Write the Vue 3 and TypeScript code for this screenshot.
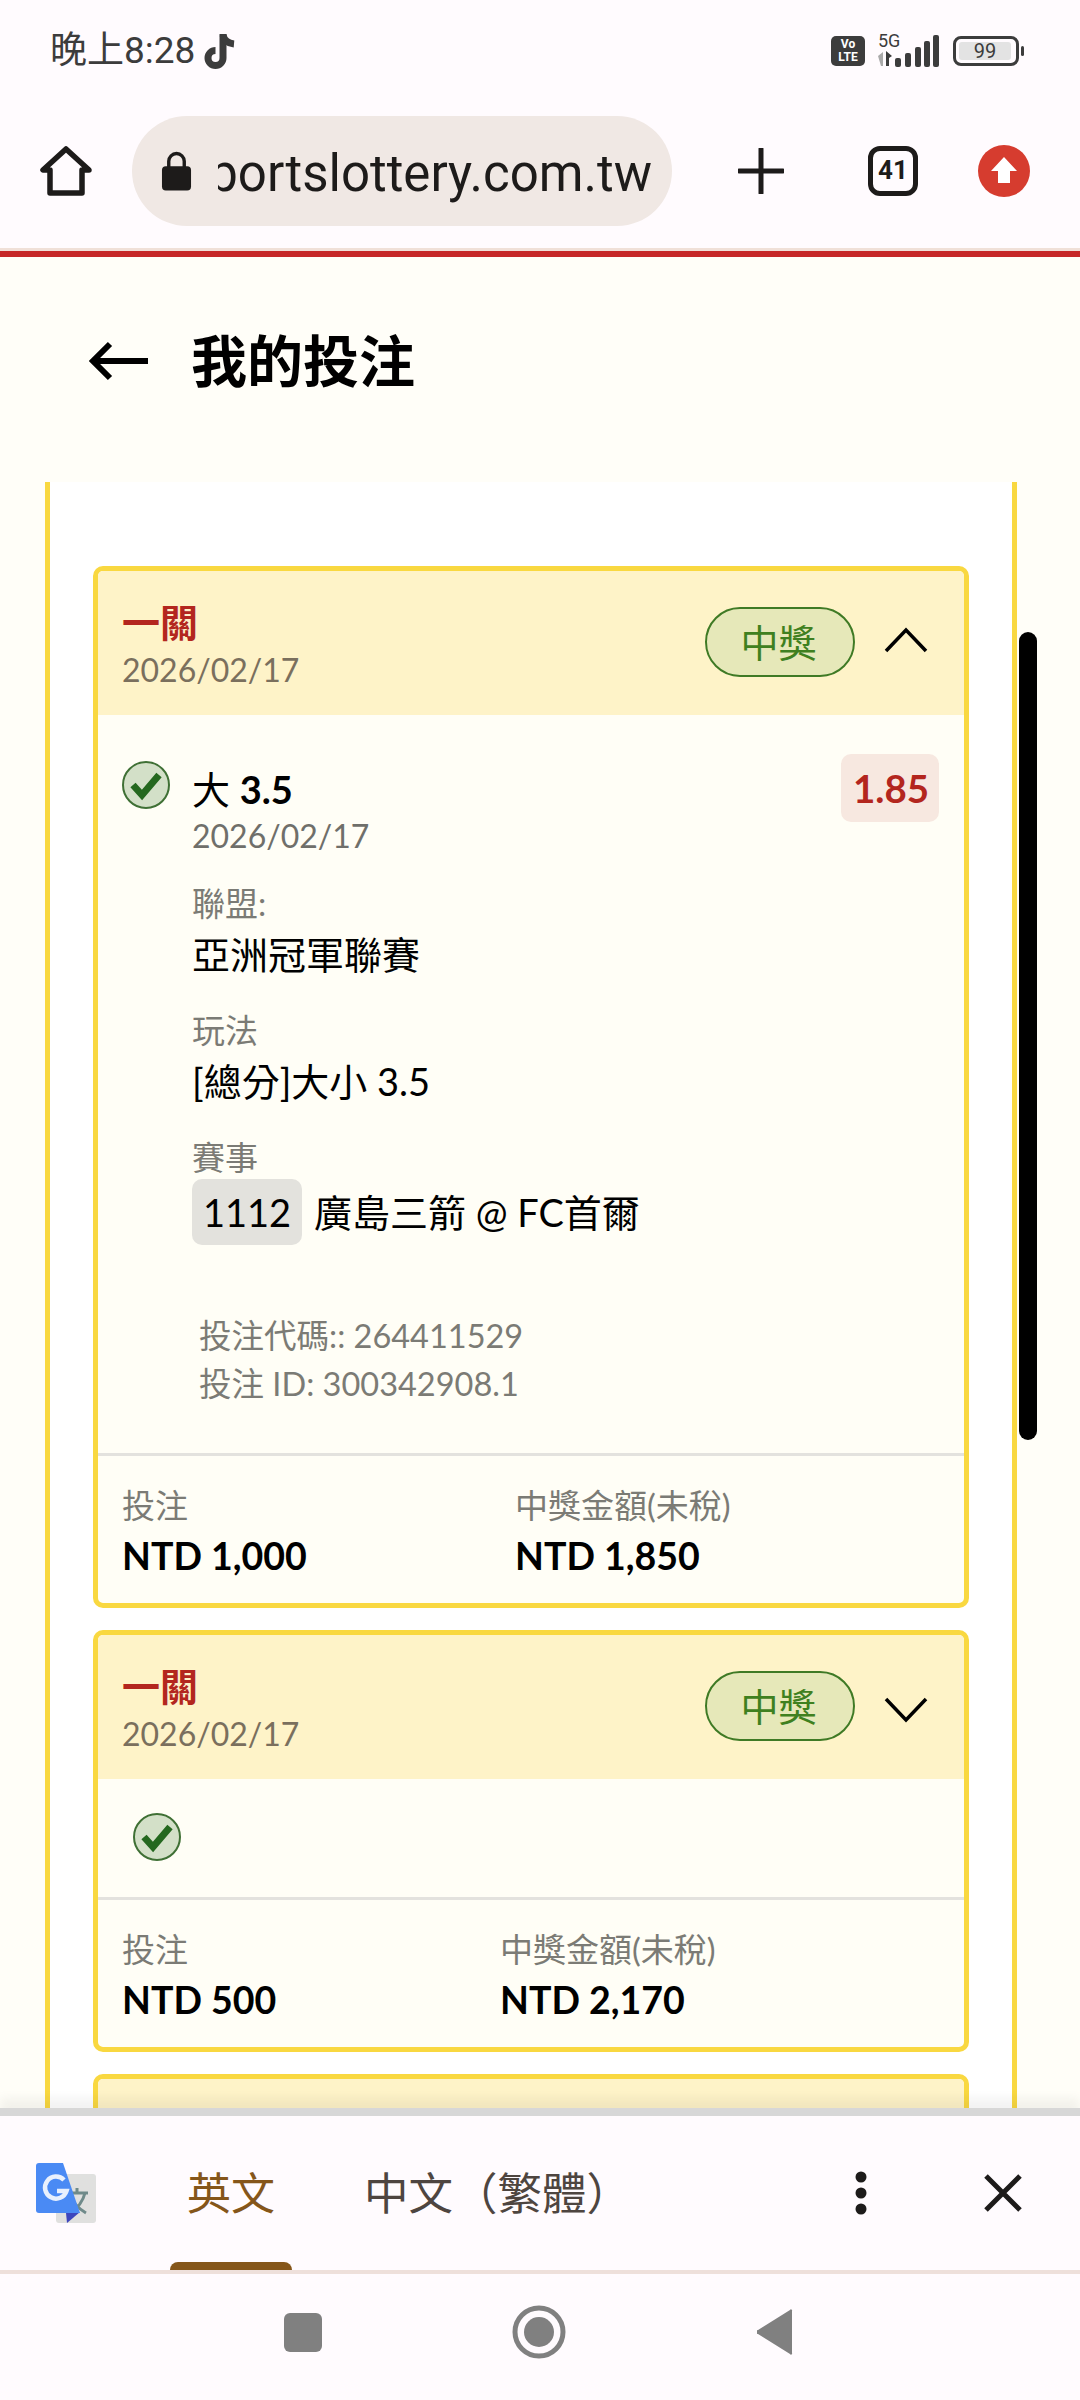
<template>
  <div class="phone">
    <!-- 狀態列 -->
    <div class="status-bar">
      <span class="time">晚上8:28</span>
      <svg class="tiktok" viewBox="0 0 34 38">
        <path d="M20 2v24a7.5 7.5 0 1 1-7.5-7.5" fill="none" stroke="#3c3c3c" stroke-width="7" />
        <path d="M20 3c1 5 5 8.500 11 9" fill="none" stroke="#3c3c3c" stroke-width="7" />
      </svg>
      <span class="status-right">
        <span class="volte">Vo<br />LTE</span>
        <span class="signal">
          <span class="five-g">5G</span>
          <svg class="bars" viewBox="0 0 66 32">
            <path d="M3 21l5-4v14H6z" fill="#aaa" />
            <path d="M11 16l6 5-3 2v8h-3z" fill="#3c3c3c" />
            <rect x="20" y="23" width="6" height="9" rx="2" fill="#3c3c3c" />
            <rect x="30" y="18" width="6" height="14" rx="2" fill="#3c3c3c" />
            <rect x="40" y="12" width="6" height="20" rx="2" fill="#3c3c3c" />
            <rect x="49" y="6" width="6" height="26" rx="2" fill="#3c3c3c" />
            <rect x="58" y="0" width="6" height="32" rx="2" fill="#3c3c3c" />
          </svg>
        </span>
        <span class="battery"><span class="battery-level">99</span></span>
        <span class="battery-cap"></span>
      </span>
    </div>

    <!-- 瀏覽器工具列 -->
    <div class="toolbar">
      <svg class="home" viewBox="0 0 52 50">
        <path d="M26 3 3 24h7v23h32V24h7z" fill="none" stroke="#1d1b1a" stroke-width="5.500" stroke-linejoin="round" />
      </svg>
      <div class="url-pill">
        <svg class="lock" viewBox="0 0 32 40">
          <path d="M8 16V10a8 8 0 0 1 16 0v6" fill="none" stroke="#1d1b1a" stroke-width="3.500" />
          <rect x="1" y="15" width="30" height="25" rx="4" fill="#1d1b1a" />
        </svg>
        <div class="url-clip"><span class="url">sportslottery.com.tw</span></div>
      </div>
      <svg class="plus" viewBox="0 0 46 46">
        <path d="M23 1v44M1 23h44" stroke="#1d1b1a" stroke-width="5" stroke-linecap="round" />
      </svg>
      <div class="tabs-count">41</div>
      <svg class="update" viewBox="0 0 52 52">
        <circle cx="26" cy="26" r="26" fill="#d63c2f" />
        <path d="M26 12 39 26h-7v12H20V26h-7z" fill="#fff" />
      </svg>
    </div>
    <div class="load-line"></div>

    <!-- 頁面 -->
    <div class="page">
      <div class="page-head">
        <svg class="back" viewBox="0 0 60 40">
          <path d="M60 20H6M22 3 5 20l17 17" fill="none" stroke="#000" stroke-width="6" />
        </svg>
        <h1 class="title">我的投注</h1>
      </div>
      <div class="panel">
        <div class="card">
          <div class="card-head">
            <div class="head-text">
              <div class="parlay">一關</div>
              <div class="head-date">2026/02/17</div>
            </div>
            <span class="badge">中獎</span>
            <svg class="chevron up" viewBox="0 0 44 26">
              <path d="M2 24 22 3l20 21" fill="none" stroke="#000" stroke-width="3.500" />
            </svg>
          </div>
          <div class="card-body">
            <div class="leg">
              <svg class="check" viewBox="0 0 48 48">
                <circle cx="24" cy="24" r="23" fill="#d3e0c8" stroke="#3f7035" stroke-width="2" />
                <path d="M11 24l9 10 17-20" fill="none" stroke="#24681f" stroke-width="7" />
              </svg>
              <div class="leg-main">
                <div class="pick">大 <b>3.5</b></div>
                <div class="pick-date">2026/02/17</div>
                <div class="field-label first">聯盟:</div>
                <div class="field-value">亞洲冠軍聯賽</div>
                <div class="field-label">玩法</div>
                <div class="field-value">[總分]大小 3.5</div>
                <div class="field-label">賽事</div>
                <div class="match">
                  <span class="match-no">1112</span>
                  <span>廣島三箭 @ FC首爾</span>
                </div>
              </div>
              <span class="odds">1.85</span>
            </div>
            <div class="codes">
              <div>投注代碼:: 264411529</div>
              <div>投注 ID: 300342908.1</div>
            </div>
          </div>
          <div class="card-foot">
            <div class="foot-col">
              <div class="foot-label">投注</div>
              <div class="foot-value">NTD 1,000</div>
            </div>
            <div class="foot-col">
              <div class="foot-label">中獎金額(未稅)</div>
              <div class="foot-value">NTD 1,850</div>
            </div>
          </div>
        </div>

        <div class="card">
          <div class="card-head">
            <div class="head-text">
              <div class="parlay">一關</div>
              <div class="head-date">2026/02/17</div>
            </div>
            <span class="badge">中獎</span>
            <svg class="chevron down" viewBox="0 0 44 26">
              <path d="M2 2l20 21L42 2" fill="none" stroke="#000" stroke-width="3.500" />
            </svg>
          </div>
          <div class="card-body collapsed">
            <svg class="check" viewBox="0 0 48 48">
              <circle cx="24" cy="24" r="23" fill="#d3e0c8" stroke="#3f7035" stroke-width="2" />
              <path d="M11 24l9 10 17-20" fill="none" stroke="#24681f" stroke-width="7" />
            </svg>
          </div>
          <div class="card-foot second">
            <div class="foot-col">
              <div class="foot-label">投注</div>
              <div class="foot-value">NTD 500</div>
            </div>
            <div class="foot-col">
              <div class="foot-label">中獎金額(未稅)</div>
              <div class="foot-value">NTD 2,170</div>
            </div>
          </div>
        </div>

        <div class="card">
          <div class="card-head"></div>
        </div>
      </div>
      <div class="scrollbar"></div>
    </div>

    <!-- 翻譯列 -->
    <div class="translate-bar">
      <svg class="g-logo" viewBox="0 0 60 60">
        <rect x="20" y="11" width="40" height="49" rx="3" fill="#e0e0df" />
        <path d="M30 30h22M41 25v5M34 50c8-5 13-12 15-20M34 32c3 8 9 14 16 18" fill="none" stroke="#6f8a8a" stroke-width="3" />
        <path d="M30 50l14-1-13 11z" fill="#3c45bd" />
        <path d="M3 0h24l17 50H3a3 3 0 0 1-3-3V3a3 3 0 0 1 3-3z" fill="#4a8af4" />
        <path d="M28 17a11 11 0 1 0 2.500 11H21" fill="none" stroke="#e8f0fd" stroke-width="4.500" />
      </svg>
      <div class="lang active">英文<span class="lang-mark"></span></div>
      <div class="lang">中文（繁體）</div>
      <svg class="dots" viewBox="0 0 12 44">
        <circle cx="6" cy="6" r="5.500" fill="#1d1b1a" />
        <circle cx="6" cy="22" r="5.500" fill="#1d1b1a" />
        <circle cx="6" cy="38" r="5.500" fill="#1d1b1a" />
      </svg>
      <svg class="close" viewBox="0 0 38 38">
        <path d="M2 2l34 34M36 2 2 36" stroke="#1d1b1a" stroke-width="5" />
      </svg>
    </div>

    <!-- 系統導覽列 -->
    <div class="nav-bar">
      <span class="nav-square"></span>
      <svg class="nav-circle" viewBox="0 0 54 54">
        <circle cx="27" cy="27" r="24" fill="none" stroke="#808080" stroke-width="5" />
        <circle cx="27" cy="27" r="15" fill="#808080" />
      </svg>
      <svg class="nav-back" viewBox="0 0 36 46">
        <path d="M35 2v42a1 1 0 0 1-2 1L1 25a2 2 0 0 1 0-4L33 1a1 1 0 0 1 2 1z" fill="#808080" />
      </svg>
    </div>
  </div>
</template>

<script setup lang="ts">
</script>

<style>
html,
body {
  margin: 0;
  background: #fffbfe;
}
</style>

<style scoped>
.phone {
  width: 1080px;
  height: 2400px;
  display: flex;
  flex-direction: column;
  overflow: hidden;
  background: #fffbfe;
  font-family: Lato, "Noto Sans CJK TC", sans-serif;
  color: #000;
}

/* 狀態列 */
.status-bar {
  height: 80px;
  flex-shrink: 0;
  display: flex;
  align-items: center;
  padding: 21px 56px 0 50px;
  box-sizing: border-box;
}

.time {
  font-family: Roboto, "Noto Sans CJK TC", sans-serif;
  font-size: 37px;
  color: #3c3c3c;
  line-height: 44px;
}

.tiktok {
  width: 34px;
  height: 38px;
  margin-left: 8px;
}

.status-right {
  margin-left: auto;
  display: flex;
  align-items: center;
}

.volte {
  width: 34px;
  height: 30px;
  border-radius: 5px;
  background: #3c3c3c;
  color: #fff;
  font-family: Roboto, sans-serif;
  font-size: 12px;
  font-weight: 700;
  line-height: 13px;
  text-align: center;
  padding-top: 2px;
  box-sizing: border-box;
}

.signal {
  position: relative;
  width: 66px;
  height: 32px;
  margin-left: 10px;
}

.five-g {
  position: absolute;
  left: 3px;
  top: -5px;
  font-family: Roboto, sans-serif;
  font-size: 18px;
  color: #3c3c3c;
}

.bars {
  width: 66px;
  height: 32px;
  display: block;
}

.battery {
  width: 66px;
  height: 30px;
  margin-left: 12px;
  border: 3px solid #3c3c3c;
  border-radius: 8px;
  box-sizing: border-box;
  padding: 3px;
}

.battery-level {
  display: block;
  height: 18px;
  width: 52px;
  border-radius: 3px;
  background: #e3e3e3;
  font-family: Roboto, sans-serif;
  font-size: 20px;
  line-height: 19px;
  text-align: center;
  color: #3c3c3c;
}

.battery-cap {
  width: 3px;
  height: 10px;
  margin-left: 2px;
  border-radius: 2px;
  background: #3c3c3c;
}

/* 工具列 */
.toolbar {
  height: 168px;
  flex-shrink: 0;
  display: flex;
  align-items: center;
  padding-top: 14px;
  box-sizing: border-box;
}

.home {
  width: 52px;
  height: 50px;
  margin-left: 40px;
}

.url-pill {
  width: 540px;
  height: 110px;
  margin-left: 40px;
  border-radius: 55px;
  background: #f0e8e4;
  display: flex;
  align-items: center;
  padding-left: 29px;
  box-sizing: border-box;
}

.lock {
  width: 31px;
  height: 40px;
  flex-shrink: 0;
}

.url-clip {
  width: 434px;
  margin-left: 26px;
  padding-top: 5px;
  overflow: hidden;
  direction: rtl;
  white-space: nowrap;
}

.url {
  font-family: Roboto, sans-serif;
  font-size: 51px;
  color: #1d1b1a;
  line-height: 60px;
  unicode-bidi: plaintext;
}

.plus {
  width: 46px;
  height: 46px;
  margin-left: 66px;
}

.tabs-count {
  width: 50px;
  height: 50px;
  margin-left: 84px;
  border: 5px solid #1d1b1a;
  border-radius: 12px;
  box-sizing: border-box;
  font-family: Roboto, sans-serif;
  font-size: 26px;
  font-weight: 700;
  line-height: 39px;
  text-align: center;
  color: #1d1b1a;
}

.update {
  width: 52px;
  height: 52px;
  margin-left: 60px;
}

.load-line {
  height: 9px;
  flex-shrink: 0;
  background: #c62828;
  border-top: 3px solid #f0e0d8;
  box-sizing: border-box;
}

/* 頁面 */
.page {
  flex: 1;
  min-height: 0;
  position: relative;
  overflow: hidden;
  background: #fffef8;
}

.page-head {
  height: 225px;
  display: flex;
  align-items: center;
  padding: 0 0 18px 88px;
  box-sizing: border-box;
}

.back {
  width: 60px;
  height: 40px;
}

.title {
  margin: 0 0 0 43px;
  font-size: 56px;
  font-weight: 700;
  line-height: 70px;
  color: #000;
}

.panel {
  width: 972px;
  margin-left: 45px;
  padding: 84px 43px 0;
  box-sizing: border-box;
  border-left: 5px solid #f9d840;
  border-right: 5px solid #f9d840;
  background: #fff;
  height: 1700px;
  display: flex;
  flex-direction: column;
  gap: 22px;
}

.card {
  border: 5px solid #f9d840;
  border-radius: 10px;
  background: #fffef6;
  overflow: hidden;
  flex-shrink: 0;
}

.card-head {
  height: 144px;
  background: #fef3c8;
  display: flex;
  align-items: center;
  padding: 0 36px 0 24px;
  box-sizing: border-box;
}

.head-text {
  padding-top: 7px;
}

.parlay {
  font-size: 38px;
  font-weight: 700;
  line-height: 46px;
  color: #b3261e;
}

.head-date {
  font-size: 32px;
  line-height: 49px;
  color: #7a6f5d;
}

.badge {
  margin: -3px 0 0 auto;
  width: 150px;
  height: 70px;
  border: 2px solid #3f7a25;
  border-radius: 35px;
  background: #e6e8b9;
  box-sizing: border-box;
  color: #3f8020;
  font-size: 38px;
  line-height: 66px;
  text-align: center;
  padding-right: 3px;
}

.chevron {
  width: 44px;
  height: 26px;
  margin-left: 29px;
}

.chevron.up {
  margin-top: -6px;
}

.chevron.down {
  margin-top: 6px;
}

.card-body {
  padding: 46px 24px 0;
}

.leg {
  display: flex;
  align-items: flex-start;
}

.check {
  width: 48px;
  height: 48px;
  flex-shrink: 0;
}

.leg-main {
  flex: 1;
  margin-left: 22px;
  padding-top: 3px;
}

.pick {
  font-size: 38px;
  line-height: 50px;
}

.pick b {
  font-weight: 700;
}

.pick-date {
  font-size: 32px;
  line-height: 44px;
  color: #6f6f6a;
}

.field-label {
  margin-top: 29px;
  font-size: 33px;
  line-height: 44px;
  color: #7b7b75;
}

.field-label.first {
  margin-top: 23px;
}

.field-value {
  font-size: 38px;
  line-height: 50px;
  margin-top: 4px;
}

.match {
  display: flex;
  align-items: center;
  gap: 12px;
  font-size: 38px;
  line-height: 50px;
}

.match-no {
  width: 110px;
  height: 66px;
  border-radius: 10px;
  background: #e3e2dd;
  line-height: 66px;
  text-align: center;
}

.odds {
  margin-top: -7px;
  width: 98px;
  height: 68px;
  border-radius: 10px;
  background: #f7e8e0;
  color: #b3261e;
  font-size: 38.500px;
  font-weight: 700;
  line-height: 68px;
  text-align: center;
  flex-shrink: 0;
  margin-right: 1px;
  padding-left: 2px;
  box-sizing: border-box;
}

.codes {
  margin: 67px 0 0 77px;
  padding-bottom: 45px;
  font-size: 32.500px;
  line-height: 48px;
  color: #7b7b75;
}

.card-body.collapsed {
  height: 118px;
  padding: 34px 0 0 35px;
  box-sizing: border-box;
}

.card-foot {
  border-top: 3px solid #e3e2de;
  display: flex;
  padding: 27px 24px 0;
  height: 150px;
  box-sizing: border-box;
}

.foot-col {
  width: 393px;
}

.card-foot.second .foot-col {
  width: 378px;
}

.foot-label {
  font-size: 33px;
  line-height: 44px;
  color: #7b7b75;
}

.foot-value {
  margin-top: 4px;
  font-size: 37.500px;
  font-weight: 700;
  line-height: 50px;
}

.scrollbar {
  position: absolute;
  left: 1019px;
  top: 375px;
  width: 18px;
  height: 808px;
  border-radius: 9px;
  background: #000;
}

/* 翻譯列 */
.translate-bar {
  height: 166px;
  flex-shrink: 0;
  display: flex;
  align-items: center;
  position: relative;
  background: #fffbfe;
  border-top: 8px solid #d7d7d7;
  border-bottom: 4px solid #eee0db;
  box-sizing: border-box;
  box-shadow: 0 -10px 10px rgba(0, 0, 0, 0.05);
}

.g-logo {
  width: 60px;
  height: 60px;
  margin-left: 36px;
}

.lang {
  position: relative;
  font-size: 44.500px;
  line-height: 154px;
  color: #4e4540;
  margin-left: 89px;
}

.lang.active {
  color: #85561a;
  font-size: 44px;
  margin-left: 91px;
}

.lang-mark {
  position: absolute;
  left: -17px;
  right: -17px;
  bottom: 0;
  height: 8px;
  border-radius: 8px 8px 0 0;
  background: #85561a;
}

.dots {
  width: 12px;
  height: 44px;
  margin-left: auto;
}

.close {
  width: 38px;
  height: 38px;
  margin: 0 58px 0 117px;
}

/* 導覽列 */
.nav-bar {
  height: 126px;
  flex-shrink: 0;
  display: flex;
  align-items: center;
  padding-left: 284px;
  box-sizing: border-box;
  padding-bottom: 10px;
  background: #fffbfe;
}

.nav-square {
  width: 38px;
  height: 39px;
  border-radius: 6px;
  background: #808080;
}

.nav-circle {
  width: 54px;
  height: 54px;
  margin-left: 190px;
}

.nav-back {
  width: 36px;
  height: 46px;
  margin-left: 191px;
}
</style>
